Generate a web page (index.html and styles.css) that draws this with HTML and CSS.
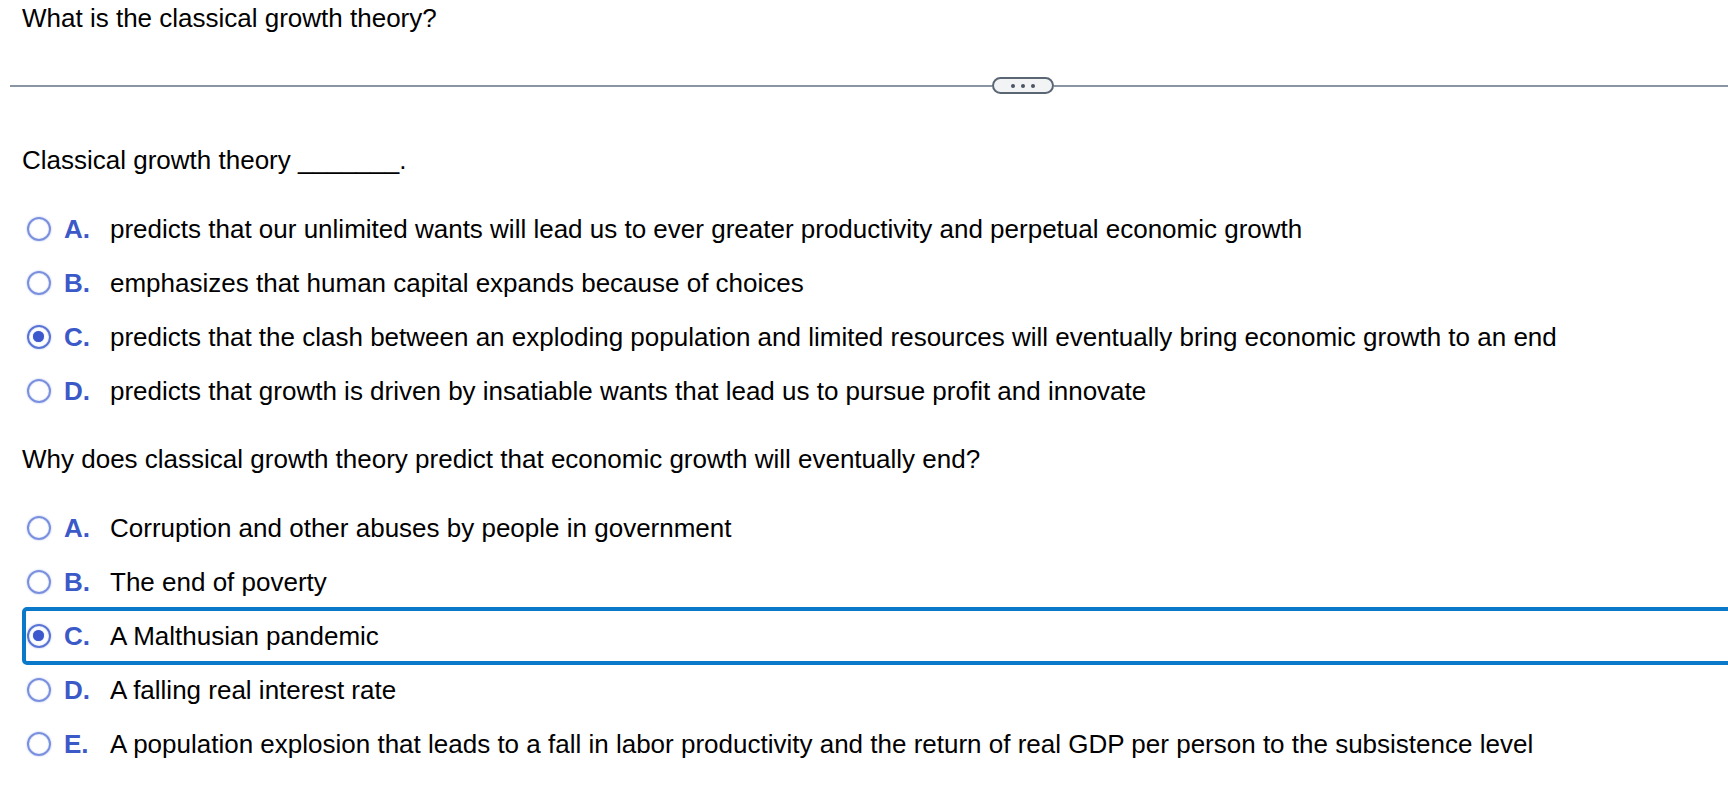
FILE: index.html
```html
<!DOCTYPE html>
<html lang="en">
<head>
<meta charset="utf-8">
<title>Classical growth theory</title>
<link rel="stylesheet" href="styles.css">
</head>
<body>
<div class="page">
  <h1 class="title">What is the classical growth theory?</h1>
  <div class="divider">
    <span class="line line-left"></span>
    <span class="pill"><i class="dot"></i><i class="dot"></i><i class="dot"></i></span>
    <span class="line line-right"></span>
  </div>

  <p class="prompt prompt-first">Classical growth theory <span class="blank">_______</span>.</p>
  <ul class="options">
    <li class="option"><span class="radio"></span><span class="letter">A.</span><span class="text">predicts that our unlimited wants will lead us to ever greater productivity and perpetual economic growth</span></li>
    <li class="option"><span class="radio"></span><span class="letter">B.</span><span class="text">emphasizes that human capital expands because of choices</span></li>
    <li class="option"><span class="radio checked"></span><span class="letter">C.</span><span class="text">predicts that the clash between an exploding population and limited resources will eventually bring economic growth to an end</span></li>
    <li class="option"><span class="radio"></span><span class="letter">D.</span><span class="text">predicts that growth is driven by insatiable wants that lead us to pursue profit and innovate</span></li>
  </ul>

  <p class="prompt prompt-second">Why does classical growth theory predict that economic growth will eventually end?</p>
  <ul class="options">
    <li class="option"><span class="radio"></span><span class="letter">A.</span><span class="text">Corruption and other abuses by people in government</span></li>
    <li class="option"><span class="radio"></span><span class="letter">B.</span><span class="text">The end of poverty</span></li>
    <li class="option option-focused"><span class="radio checked"></span><span class="letter">C.</span><span class="text">A Malthusian pandemic</span></li>
    <li class="option"><span class="radio"></span><span class="letter">D.</span><span class="text">A falling real interest rate</span></li>
    <li class="option"><span class="radio"></span><span class="letter">E.</span><span class="text">A population explosion that leads to a fall in labor productivity and the return of real GDP per person to the subsistence level</span></li>
  </ul>
</div>
</body>
</html>
```

FILE: styles.css
```css
html, body {
  margin: 0;
  padding: 0;
  background: #ffffff;
  overflow: hidden;
}

body {
  font-family: "Liberation Sans", Arial, Helvetica, sans-serif;
  font-size: 26px;
  color: #000000;
}

.page {
  padding-left: 22px;
}

.title {
  margin: 0;
  padding-top: 3px;
  font-size: 26px;
  font-weight: normal;
  line-height: 30px;
}

.divider {
  display: flex;
  align-items: center;
  height: 17px;
  margin: 44px 0 0 -12px;
}

.line {
  height: 2px;
  background: #8a95a3;
}

.line-left {
  width: 982px;
  flex: none;
}

.line-right {
  flex: 1;
}

.pill {
  flex: none;
  box-sizing: border-box;
  width: 62px;
  height: 17px;
  border: 2px solid #5b6675;
  border-radius: 9px;
  background: #f1f3f5;
  display: flex;
  align-items: center;
  justify-content: center;
  gap: 6px;
}

.dot {
  width: 4px;
  height: 4px;
  border-radius: 50%;
  background: #4a5462;
}

.prompt {
  margin: 0;
  line-height: 54px;
}

.prompt-first {
  margin-top: 39px;
}

.prompt-second {
  margin-top: 14px;
}

.options {
  list-style: none;
  margin: 15px 0 0 0;
  padding: 0;
}

.option {
  display: flex;
  align-items: center;
  height: 54px;
  padding-left: 5px;
  white-space: nowrap;
}

.option-focused {
  box-sizing: border-box;
  height: 58px;
  margin: -2px -30px -2px 0;
  padding-left: 1px;
  border: 4px solid #0b79c9;
  border-radius: 5px;
}

.radio {
  flex: none;
  box-sizing: border-box;
  width: 24px;
  height: 24px;
  border: 2.5px solid #7a90de;
  border-radius: 50%;
  box-shadow: 0 0 2px rgba(100, 128, 222, 0.55), inset 0 0 1.5px rgba(100, 128, 222, 0.5);
  position: relative;
}

.radio.checked {
  border-color: #5a74d6;
}

.radio.checked::after {
  content: "";
  position: absolute;
  left: 4px;
  top: 4px;
  width: 11px;
  height: 11px;
  border-radius: 50%;
  background: #3c58cc;
  box-shadow: 0 0 1px rgba(60, 88, 204, 0.7);
}

.letter {
  flex: none;
  width: 46px;
  margin-left: 13px;
  font-weight: bold;
  color: #3c59c8;
}

.text {
  flex: none;
}
```
